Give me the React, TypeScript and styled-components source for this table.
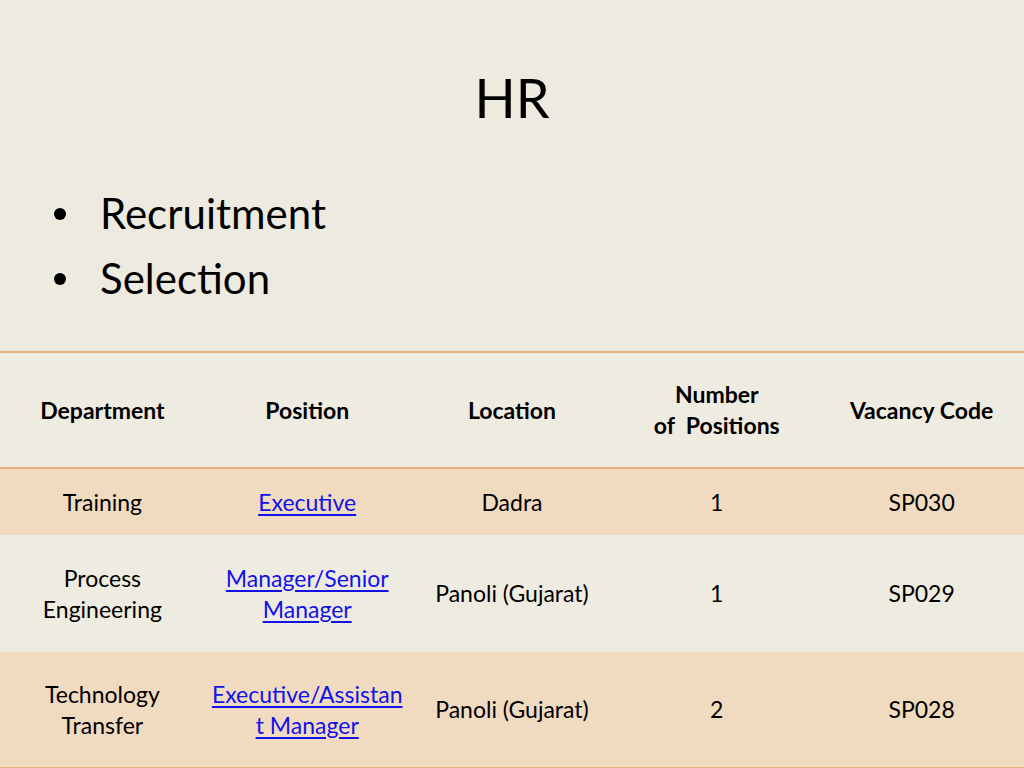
import React from "react";
import styled, { createGlobalStyle } from "styled-components";

const Global = createGlobalStyle`
  html, body { margin: 0; padding: 0; background: #edeae0; }
  body { font-family: Lato, "Open Sans", "Liberation Sans", sans-serif; color: #000; }
`;

const Slide = styled.div`
  width: 1024px;
  height: 768px;
  background: #edeae0;
  display: flex;
  flex-direction: column;
  overflow: hidden;
`;

const Title = styled.h1`
  margin: 0;
  padding-top: 64px;
  font-weight: 400;
  font-size: 54px;
  line-height: 67px;
  text-align: center;
`;

const Bullets = styled.ul`
  list-style: none;
  margin: 50px 0 0;
  padding: 0 0 0 54px;
`;

const Bullet = styled.li`
  display: flex;
  align-items: center;
  font-size: 42px;
  line-height: 65px;
  height: 65px;
  &::before {
    content: "";
    width: 12px;
    height: 12px;
    border-radius: 50%;
    background: #000;
    margin-right: 34px;
    flex: none;
  }
`;

const Table = styled.div`
  margin-top: 40px;
  border-top: 2px solid #eaae7f;
  border-bottom: 2px solid #eaae7f;
  display: flex;
  flex-direction: column;
`;

const Row = styled.div<{ $h: number; $tone: "plain" | "peach"; $head?: boolean }>`
  display: grid;
  grid-template-columns: repeat(5, 1fr);
  height: ${(p) => p.$h}px;
  background: ${(p) => (p.$tone === "peach" ? "#f0dac0" : "#eeebe1")};
  border-bottom: ${(p) => (p.$head ? "2px solid #eaae7f" : "none")};
  font-weight: ${(p) => (p.$head ? 700 : 400)};
`;

const Cell = styled.div<{ $pre?: boolean }>`
  display: flex;
  align-items: center;
  justify-content: center;
  text-align: center;
  font-size: 23px;
  line-height: 31px;
  white-space: ${(p) => (p.$pre ? "pre" : "pre-line")};
  padding: 0 2px;
`;

const Link = styled.a`
  color: #1212e8;
  text-decoration: underline;
  text-underline-offset: 3px;
`;

const rows = [
  { h: 66, tone: "peach" as const, dept: "Training", pos: "Executive", loc: "Dadra", n: "1", code: "SP030" },
  { h: 117, tone: "plain" as const, dept: "Process\nEngineering", pos: "Manager/Senior\nManager", loc: "Panoli (Gujarat)", n: "1", code: "SP029" },
  { h: 115, tone: "peach" as const, dept: "Technology\nTransfer", pos: "Executive/Assistan\nt Manager", loc: "Panoli (Gujarat)", n: "2", code: "SP028" },
];

export default function App() {
  return (
    <Slide>
      <Global />
      <Title>HR</Title>
      <Bullets>
        <Bullet>Recruitment</Bullet>
        <Bullet>Selection</Bullet>
      </Bullets>
      <Table>
        <Row $h={114} $tone="plain" $head>
          <Cell>Department</Cell>
          <Cell>Position</Cell>
          <Cell>Location</Cell>
          <Cell $pre>{"Number\nof  Positions"}</Cell>
          <Cell>Vacancy Code</Cell>
        </Row>
        {rows.map((r) => (
          <Row key={r.code} $h={r.h} $tone={r.tone}>
            <Cell>{r.dept}</Cell>
            <Cell>
              <Link href="#">{r.pos}</Link>
            </Cell>
            <Cell>{r.loc}</Cell>
            <Cell>{r.n}</Cell>
            <Cell>{r.code}</Cell>
          </Row>
        ))}
      </Table>
    </Slide>
  );
}
